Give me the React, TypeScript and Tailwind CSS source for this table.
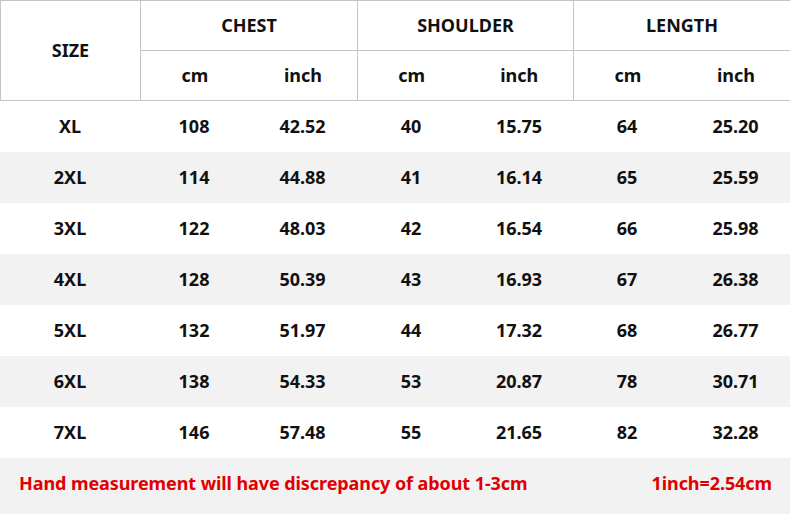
const rows = [
  ["XL", "108", "42.52", "40", "15.75", "64", "25.20"],
  ["2XL", "114", "44.88", "41", "16.14", "65", "25.59"],
  ["3XL", "122", "48.03", "42", "16.54", "66", "25.98"],
  ["4XL", "128", "50.39", "43", "16.93", "67", "26.38"],
  ["5XL", "132", "51.97", "44", "17.32", "68", "26.77"],
  ["6XL", "138", "54.33", "53", "20.87", "78", "30.71"],
  ["7XL", "146", "57.48", "55", "21.65", "82", "32.28"],
];

const cols = "grid grid-cols-[140px_108px_109px_108px_108px_108px_109px]";

export default function App() {
  return (
    <div className="w-[790px] h-[514px] bg-white text-[18px] font-bold text-[#111] font-['Noto_Sans',sans-serif] overflow-hidden">
      {/* header */}
      <div className="grid grid-cols-[140px_217px_216px_217px] h-[101px] border-t border-l border-[#c4c4c4]">
        <div className="flex items-center justify-center border-r border-b border-[#c4c4c4]">SIZE</div>
        {["CHEST", "SHOULDER", "LENGTH"].map((g) => (
          <div key={g} className="grid grid-rows-[50px_1fr] border-r border-b border-[#c4c4c4]">
            <div className="flex items-center justify-center border-b border-[#c4c4c4]">{g}</div>
            <div className="grid grid-cols-2">
              <div className="flex items-center justify-center">cm</div>
              <div className="flex items-center justify-center">inch</div>
            </div>
          </div>
        ))}
      </div>

      {/* body */}
      {rows.map((r, i) => (
        <div key={r[0]} className={`${cols} h-[51px] ${i % 2 === 1 ? "bg-[#f2f2f2]" : "bg-white"}`}>
          {r.map((v, j) => (
            <div key={j} className="flex items-center justify-center">{v}</div>
          ))}
        </div>
      ))}

      {/* footer */}
      <div className="flex items-start justify-between h-[56px] bg-[#f2f2f2] pt-[12px] pl-[19px] pr-[18px] text-[#e00000] tracking-[-0.08px]">
        <span>Hand measurement will have discrepancy of about 1-3cm</span>
        <span>1inch=2.54cm</span>
      </div>
    </div>
  );
}
